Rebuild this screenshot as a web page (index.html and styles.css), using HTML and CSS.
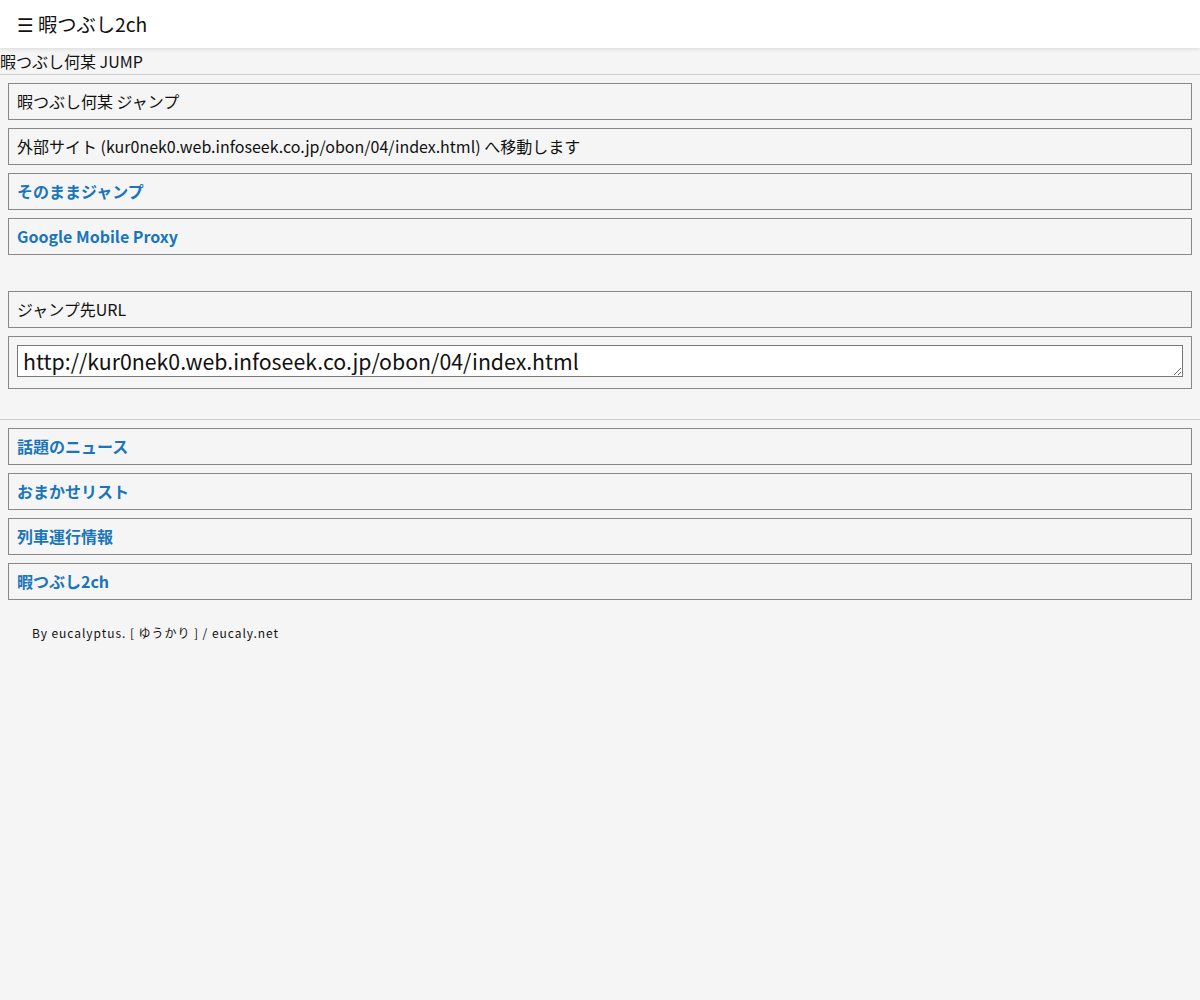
FILE: index.html
```html
<!DOCTYPE html>
<html lang="ja">
<head>
<meta charset="utf-8">
<title>暇つぶし何某 JUMP</title>
<link rel="stylesheet" href="styles.css">
</head>
<body>
<header class="topbar"><span class="menu">☰</span> 暇つぶし2ch</header>
<div class="subtitle">暇つぶし何某 JUMP</div>
<section class="group">
  <div class="item">暇つぶし何某 ジャンプ</div>
  <div class="item">外部サイト (kur0nek0.web.infoseek.co.jp/obon/04/index.html) へ移動します</div>
  <a class="item link" href="#">そのままジャンプ</a>
  <a class="item link" href="#">Google Mobile Proxy</a>
</section>
<section class="group url-group">
  <div class="item">ジャンプ先URL</div>
  <div class="item field"><textarea class="url" rows="1">http://kur0nek0.web.infoseek.co.jp/obon/04/index.html</textarea></div>
</section>
<hr class="sep">
<section class="group">
  <a class="item link" href="#">話題のニュース</a>
  <a class="item link" href="#">おまかせリスト</a>
  <a class="item link" href="#">列車運行情報</a>
  <a class="item link" href="#">暇つぶし2ch</a>
</section>
<footer class="credit">By eucalyptus. [ ゆうかり ] / eucaly.net</footer>
</body>
</html>
```

FILE: styles.css
```css
html, body {
  margin: 0;
  padding: 0;
  background: #f5f5f5;
  color: #111;
  font-family: "Noto Sans CJK JP", "Noto Sans", sans-serif;
  font-size: 16px;
}
.topbar {
  height: 48px;
  line-height: 48px;
  background: #fff;
  padding: 0 17px;
  font-size: 19.3px;
  box-shadow: 0 1px 4px rgba(0, 0, 0, 0.12);
  position: relative;
}
.menu {
  font-family: "DejaVu Sans", sans-serif;
  font-size: 18.5px;
}
.subtitle {
  height: 26px;
  line-height: 26px;
  border-bottom: 1px solid #ccc;
  font-size: 16px;
}
.group {
  display: flex;
  flex-direction: column;
  gap: 8px;
  padding: 8px 8px 0;
}
.url-group {
  padding-top: 36px;
}
.item {
  display: block;
  border: 1px solid #888;
  padding: 0 8px;
  height: 35px;
  line-height: 35px;
  color: #111;
  text-decoration: none;
}
.link {
  color: #1a75bb;
  font-weight: bold;
}
.item.field {
  height: auto;
  line-height: normal;
  padding: 8px 8px 11px;
}
.url {
  display: block;
  box-sizing: border-box;
  width: 100%;
  height: 32px;
  margin: 0;
  padding: 0 5px;
  border: 1px solid #777;
  background: #fff;
  font-family: "Noto Sans CJK JP", "Noto Sans", sans-serif;
  font-size: 21.3px;
  line-height: 30px;
  color: #111;
  overflow: hidden;
}
.sep {
  border: 0;
  border-top: 1px solid #ccc;
  margin: 30px 0 0;
}
.credit {
  padding: 24px 32px;
  font-size: 12px;
  letter-spacing: 0.95px;
}
```
